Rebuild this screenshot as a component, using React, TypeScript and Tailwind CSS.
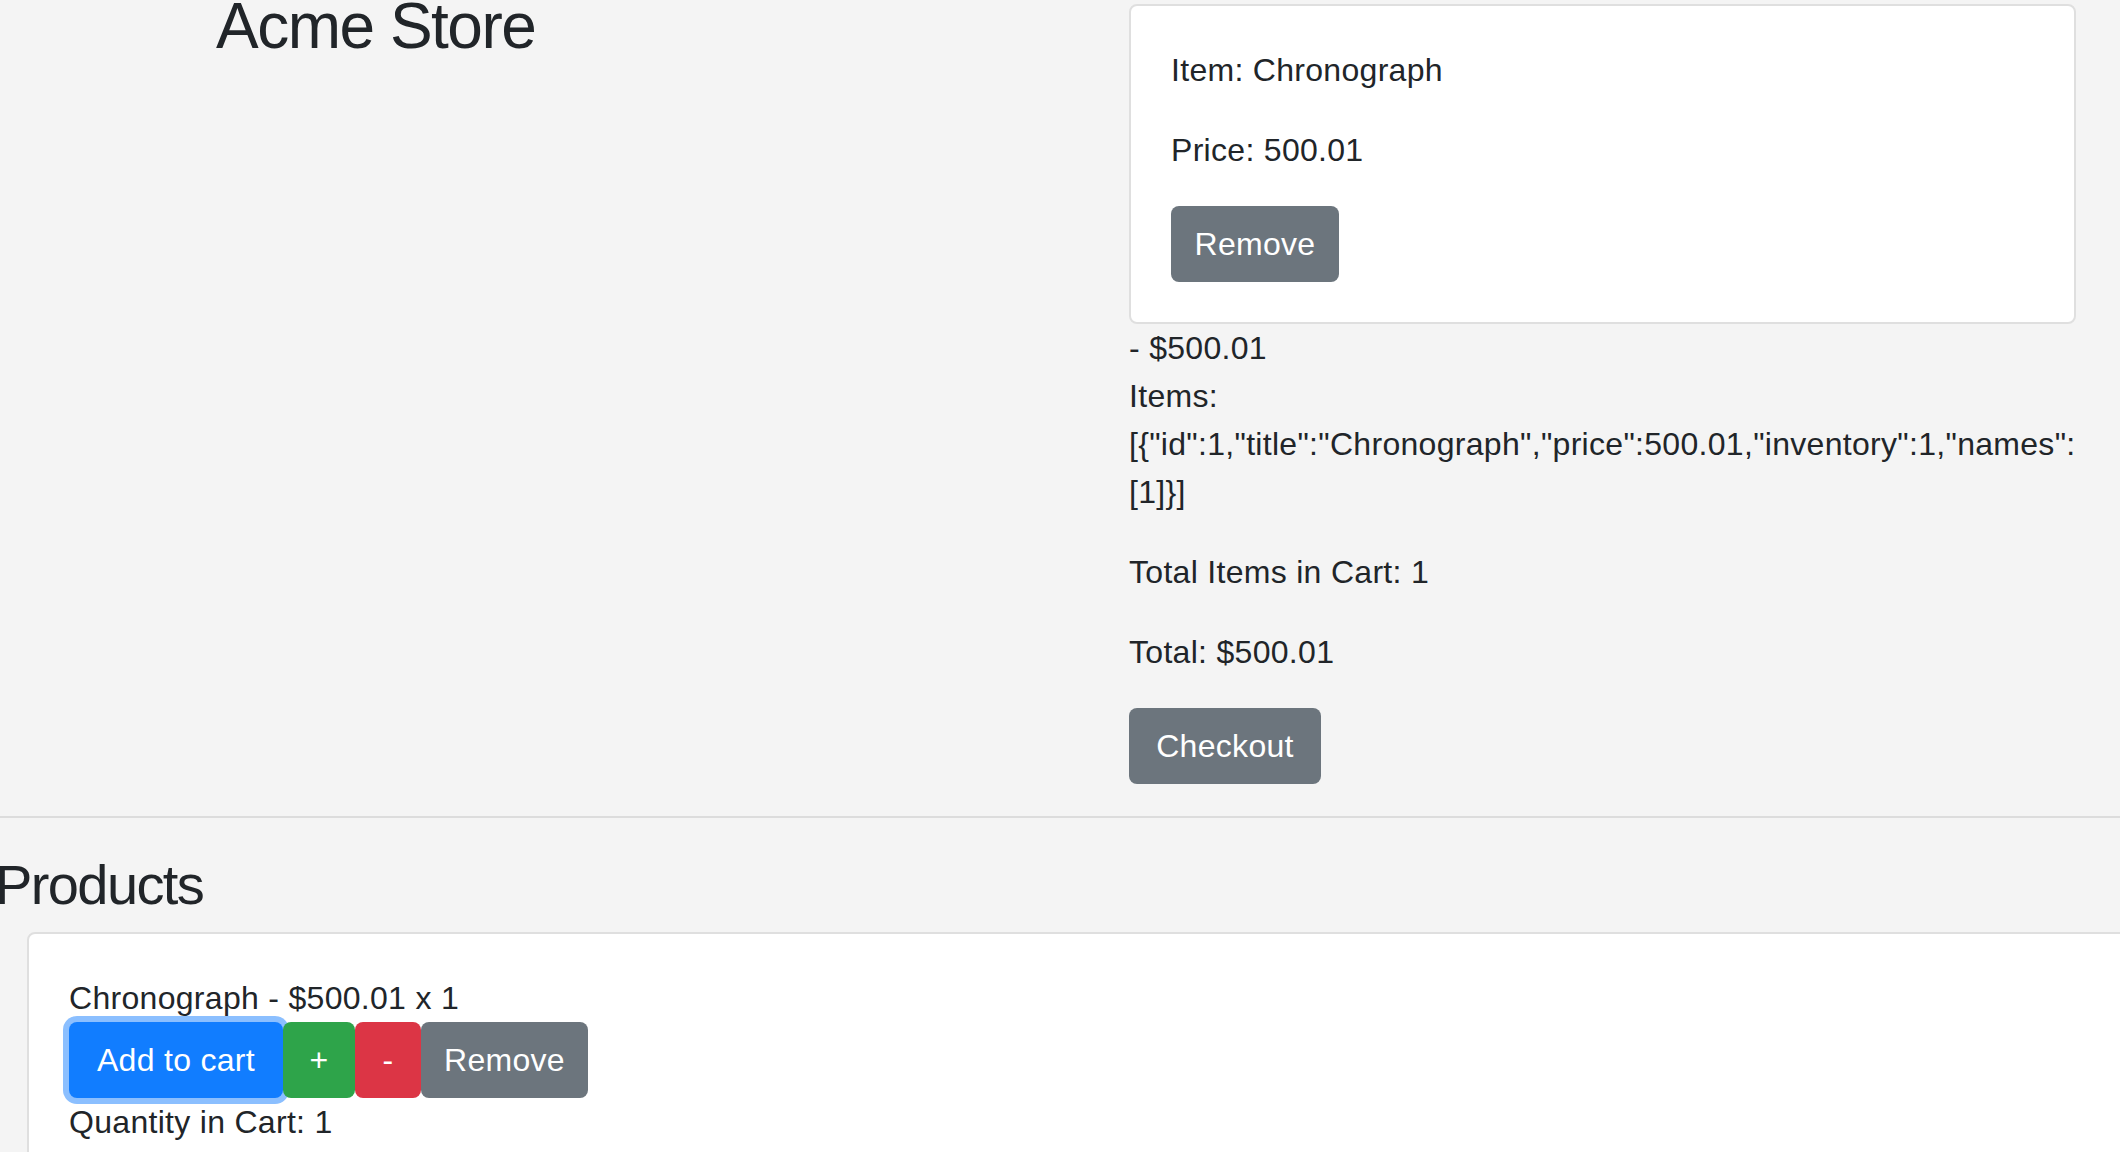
import React from "react";

const font = { fontFamily: '"Liberation Sans", Arial, sans-serif' };

function Btn({
  label,
  className,
}: {
  label: string;
  className: string;
}) {
  return (
    <button
      type="button"
      className={`flex shrink-0 items-center justify-center h-[76px] rounded-[8px] text-white text-[32px] leading-[48px] tracking-[0.3px] ${className}`}
    >
      {label}
    </button>
  );
}

export default function App() {
  return (
    <div
      className="w-[2120px] h-[1152px] overflow-hidden bg-[#f4f4f4] text-[#212529] text-[32px] leading-[48px] tracking-[0.3px]"
      style={font}
    >
      {/* Top row */}
      <div className="flex">
        <div className="w-[1129px] shrink-0">
          <h1 className="pl-[216px] mt-[-12px] text-[64px] leading-[77px] tracking-[-1.5px] font-normal">
            Acme Store
          </h1>
        </div>
        <div className="w-[947px] shrink-0 pt-[4px]">
          <div className="border-2 border-[#dfdfdf] rounded-[8px] bg-white p-[40px]">
            <p className="mb-[32px]">Item: Chronograph</p>
            <p className="mb-[32px]">Price: 500.01</p>
            <Btn label="Remove" className="w-[168px] bg-[#6c757d]" />
          </div>
          <div>- $500.01</div>
          <div>Items:</div>
          <div className="whitespace-nowrap">
            {'[{"id":1,"title":"Chronograph","price":500.01,"inventory":1,"names":'}
          </div>
          <div>{"[1]}]"}</div>
          <p className="mt-[32px]">Total Items in Cart: 1</p>
          <p className="mt-[32px]">Total: $500.01</p>
          <div className="mt-[32px]">
            <Btn label="Checkout" className="w-[192px] bg-[#6c757d]" />
          </div>
        </div>
      </div>

      <div className="mt-[32px] h-[2px] w-full bg-[#dcdcdc]" />

      <h2 className="mt-[33px] ml-[-5px] mb-[14px] text-[56px] leading-[67px] tracking-[-1.6px] font-normal">
        Products
      </h2>

      <div className="ml-[27px] w-[2200px] h-[400px] border-2 border-[#dfdfdf] rounded-[8px] bg-white pt-[40px] pl-[40px]">
        <div>Chronograph - $500.01 x 1</div>
        <div className="flex">
          <Btn
            label="Add to cart"
            className="w-[214px] bg-[#117dff] shadow-[0_0_0_6px_#8bbfff]"
          />
          <Btn label="+" className="w-[72px] bg-[#2ea44a]" />
          <Btn label="-" className="w-[66px] bg-[#dc3545]" />
          <Btn label="Remove" className="w-[167px] bg-[#6c757d]" />
        </div>
        <div>Quantity in Cart: 1</div>
      </div>
    </div>
  );
}
